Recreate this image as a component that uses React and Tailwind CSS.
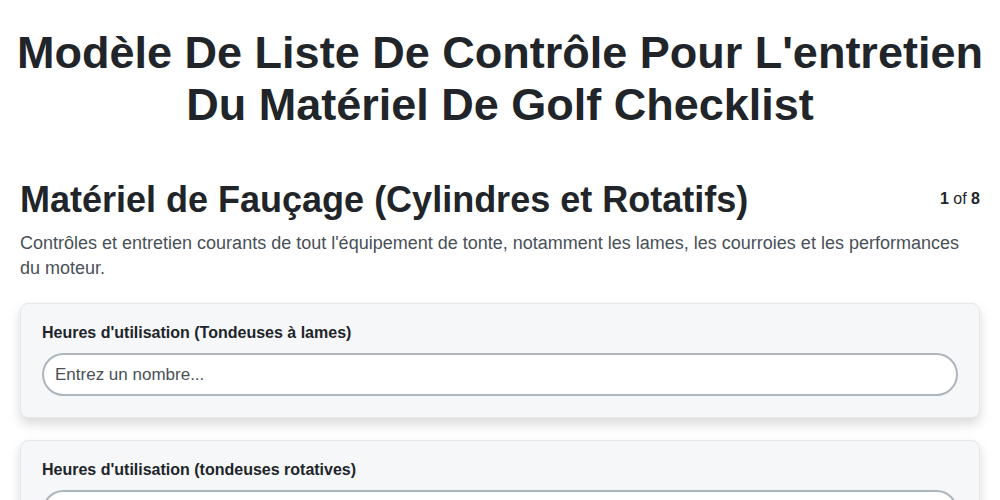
export default function App() {
  const fields = [
    "Heures d'utilisation (Tondeuses à lames)",
    "Heures d'utilisation (tondeuses rotatives)",
    "État des lames",
  ];

  return (
    <div className="min-h-screen bg-white pt-[27px] font-['Liberation_Sans',Arial,sans-serif] text-[#212529]">
      <h1 className="px-4 text-center text-[45px] font-bold leading-[52px]">
        Modèle De Liste De Contrôle Pour L'entretien Du Matériel De Golf Checklist
      </h1>

      <div className="px-5">
        <div className="mt-[47px] flex items-start justify-between">
          <h2 className="text-[36px] font-bold leading-[44px]">
            Matériel de Fauçage (Cylindres et Rotatifs)
          </h2>
          <div className="pt-[9px] text-base text-[#212529]">
            <span className="font-bold">1</span> of <span className="font-bold">8</span>
          </div>
        </div>
        <p className="mt-[9px] text-[18px] leading-[25px] text-[#495057]">
          Contrôles et entretien courants de tout l'équipement de tonte, notamment les lames, les courroies et les performances du moteur.
        </p>

        <div className="mt-[22px] flex flex-col gap-[22px]">
          {fields.map((label) => (
            <div
              key={label}
              className="rounded-lg border border-[#e5e7eb] bg-[#f6f7f9] px-[21px] pt-[19px] pb-[21px] shadow-[0_6px_12px_rgba(0,0,0,0.15)]"
            >
              <label className="block text-base font-bold leading-[20px] text-[#212529]">
                {label}
              </label>
              <input
                type="text"
                placeholder="Entrez un nombre..."
                className="mt-[10px] block h-[43px] w-full rounded-[22px] border-2 border-[#adb5bd] bg-white px-[11px] text-[17px] text-[#212529] placeholder:text-[#495057] outline-none"
              />
            </div>
          ))}
        </div>
      </div>
    </div>
  );
}
